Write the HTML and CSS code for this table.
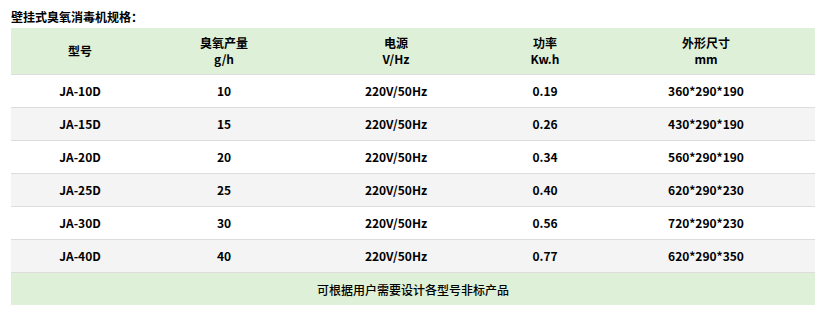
FILE: index.html
```html
<!DOCTYPE html>
<html lang="zh">
<head>
<meta charset="utf-8">
<link rel="stylesheet" href="styles.css">
</head>
<body>
<div class="page">
  <div class="title">壁挂式臭氧消毒机规格：</div>
  <table class="spec">
    <colgroup>
      <col class="c1"><col class="c2"><col class="c3"><col class="c4"><col class="c5">
    </colgroup>
    <thead>
      <tr><th>型号</th><th>臭氧产量<br>g/h</th><th>电源<br>V/Hz</th><th>功率<br>Kw.h</th><th>外形尺寸<br>mm</th></tr>
    </thead>
    <tbody>
      <tr><td>JA-10D</td><td>10</td><td>220V/50Hz</td><td>0.19</td><td>360*290*190</td></tr>
      <tr><td>JA-15D</td><td>15</td><td>220V/50Hz</td><td>0.26</td><td>430*290*190</td></tr>
      <tr><td>JA-20D</td><td>20</td><td>220V/50Hz</td><td>0.34</td><td>560*290*190</td></tr>
      <tr><td>JA-25D</td><td>25</td><td>220V/50Hz</td><td>0.40</td><td>620*290*230</td></tr>
      <tr><td>JA-30D</td><td>30</td><td>220V/50Hz</td><td>0.56</td><td>720*290*230</td></tr>
      <tr><td>JA-40D</td><td>40</td><td>220V/50Hz</td><td>0.77</td><td>620*290*350</td></tr>
    </tbody>
    <tfoot>
      <tr><td colspan="5">可根据用户需要设计各型号非标产品</td></tr>
    </tfoot>
  </table>
</div>
</body>
</html>
```
FILE: styles.css
```css
html, body { margin: 0; padding: 0; background: #fff; }
body {
  font-family: "Noto Sans CJK SC", "DejaVu Sans", sans-serif;
  color: #000;
  font-size: 12px;
}
.page { padding: 9px 15px 0 11px; }
.title {
  font-size: 12px;
  font-weight: bold;
  line-height: 16px;
  margin-bottom: 3px;
}
.spec {
  width: 804px;
  border-collapse: collapse;
  table-layout: fixed;
}
.c1 { width: 138px; }
.c2 { width: 150px; }
.c3 { width: 194px; }
.c4 { width: 104px; }
.c5 { width: 218px; }
.spec th, .spec td {
  text-align: center;
  font-weight: bold;
  padding: 0;
  font-size: 12px;
}
.spec thead th {
  background: #dff0d8;
  height: 46px;
  line-height: 16px;
  border-bottom: 1px solid #dddddd;
}
.spec tbody td {
  height: 32px;
  line-height: 16px;
  border-bottom: 1px solid #dddddd;
}
.spec tbody tr:nth-child(even) td { background: #f4f4f4; }
.spec tfoot td {
  background: #dff0d8;
  height: 32px;
  font-weight: 500;
}
```
